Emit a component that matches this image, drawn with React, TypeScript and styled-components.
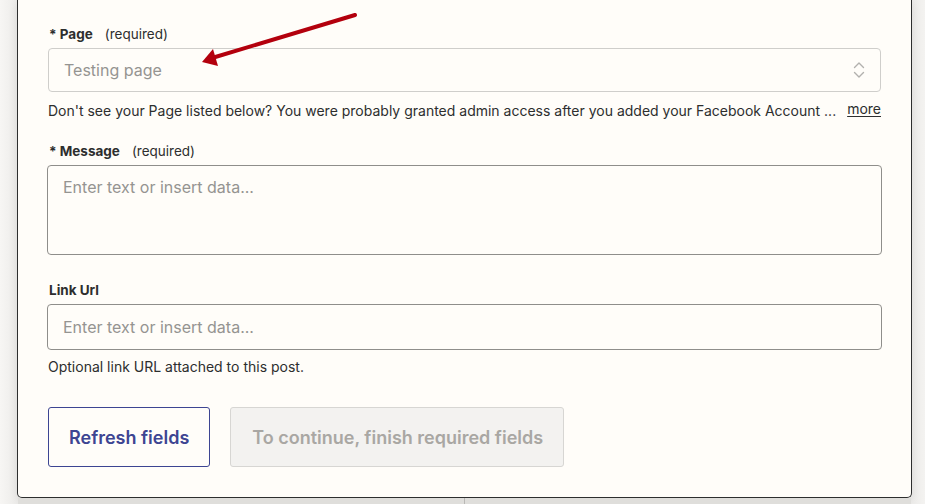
import React from "react";
import styled, { createGlobalStyle } from "styled-components";

const Global = createGlobalStyle`
  html, body { margin: 0; padding: 0; }
  body {
    background: #f4f3f1;
    font-family: Inter, "Noto Sans", "Liberation Sans", sans-serif;
    -webkit-font-smoothing: antialiased;
  }
  * { box-sizing: border-box; }
`;

const Stage = styled.div`
  position: relative;
  width: 925px;
  height: 504px;
  overflow: hidden;
  background: linear-gradient(to right, #f7f6f4 0px, #ecebe9 17px, #ecebe9 912px, #f4f3f1 925px);
  display: flex;
  flex-direction: column;
`;

const Card = styled.section`
  margin-left: 17px;
  width: 895px;
  background: #fffdf9;
  border: 1px solid #2d2e2e;
  border-top: none;
  border-radius: 0 0 5px 5px;
  padding: 24px 29px 30px 29px;
  display: flex;
  flex-direction: column;
  box-shadow: 0 2px 10px rgba(0, 0, 0, 0.08);
`;

const Field = styled.div<{ $mt?: number }>`
  display: flex;
  flex-direction: column;
  margin-top: ${(p) => p.$mt ?? 0}px;
`;

const Label = styled.div`
  display: flex;
  align-items: center;
  gap: 12px;
  height: 20px;
  font-size: 13.5px;
  color: #2d2e2e;
  margin-bottom: 4px;
  padding-left: 2px;
`;

const LabelName = styled.span`
  font-weight: 700;
`;

const LabelHint = styled.span`
  font-weight: 400;
`;

const SelectBox = styled.div`
  height: 44px;
  margin-left: 1px;
  margin-right: 1px;
  border: 1px solid #cfcecb;
  border-radius: 4px;
  display: flex;
  align-items: center;
  justify-content: space-between;
  padding: 0 14px 0 15px;
  font-size: 16px;
  color: #959491;
`;

const TextBox = styled.div<{ $h: number; $top?: boolean }>`
  height: ${(p) => p.$h}px;
  border: 1px solid #8f8e8b;
  border-radius: 4px;
  display: flex;
  align-items: ${(p) => (p.$top ? "flex-start" : "center")};
  padding: ${(p) => (p.$top ? "11px 15px" : "0 15px")};
  font-size: 16px;
  color: #959491;
`;

const Help = styled.div<{ $mt: number }>`
  margin-top: ${(p) => p.$mt}px;
  margin-left: 1px;
  height: 20px;
  display: flex;
  align-items: center;
  justify-content: space-between;
  font-size: 14px;
  color: #2d2e2e;
  white-space: nowrap;
`;

const MoreLink = styled.a`
  color: #2d2e2e;
  text-decoration: underline;
  text-underline-offset: 2px;
  margin-right: 1px;
  margin-top: -3px;
`;

const Buttons = styled.div`
  display: flex;
  gap: 20px;
  margin-top: 31px;
  margin-left: 1px;
`;

const Button = styled.button<{ $variant: "outline" | "disabled" }>`
  height: 60px;
  padding: 0 20px;
  border-radius: 3px;
  font-family: inherit;
  font-size: 18px;
  font-weight: 600;
  cursor: pointer;
  ${(p) =>
    p.$variant === "outline"
      ? `background: #fffdf9; border: 1px solid #3d4592; color: #3d4592;`
      : `background: #f3f2f0; border: 1px solid #d7d6d3; color: #a9a7a3; padding: 0 20px 0 21px;`}
`;

const Below = styled.div`
  flex: 1;
  display: flex;
  margin-left: 18px;
  width: 893px;
  background: #dfdedb;
`;

const BelowHalf = styled.div`
  width: 447px;
  border-right: 1px solid #b9b8b5;
`;

const ArrowSvg = styled.svg`
  position: absolute;
  left: 0;
  top: 0;
  pointer-events: none;
`;

function Chevrons() {
  return (
    <svg width="14" height="20" viewBox="0 0 14 20" fill="none" stroke="#b2b1ae" strokeWidth="1.4" strokeLinecap="round" strokeLinejoin="round">
      <path d="M2.5 7.5 L7 3 L11.5 7.5" />
      <path d="M2.5 12.5 L7 17 L11.5 12.5" />
    </svg>
  );
}

export default function App() {
  return (
    <>
      <Global />
      <Stage>
        <Card>
          <Field>
            <Label>
              <LabelName>* Page</LabelName>
              <LabelHint>(required)</LabelHint>
            </Label>
            <SelectBox>
              <span>Testing page</span>
              <Chevrons />
            </SelectBox>
            <Help $mt={8}>
              <span>
                Don't see your Page listed below? You were probably granted admin access after you added your Facebook Account ...
              </span>
              <MoreLink>more</MoreLink>
            </Help>
          </Field>
          <Field $mt={21}>
            <Label>
              <LabelName>* Message</LabelName>
              <LabelHint>(required)</LabelHint>
            </Label>
            <TextBox $h={90} $top>
              Enter text or insert data...
            </TextBox>
          </Field>
          <Field $mt={25}>
            <Label>
              <LabelName>Link Url</LabelName>
            </Label>
            <TextBox $h={46}>Enter text or insert data...</TextBox>
            <Help $mt={6}>
              <span>Optional link URL attached to this post.</span>
            </Help>
          </Field>
          <Buttons>
            <Button $variant="outline">Refresh fields</Button>
            <Button $variant="disabled">To continue, finish required fields</Button>
          </Buttons>
        </Card>
        <Below>
          <BelowHalf />
        </Below>
        <ArrowSvg width="925" height="504" viewBox="0 0 925 504">
          <line x1="355" y1="15" x2="212" y2="58" stroke="#b3000d" strokeWidth="4" strokeLinecap="round" />
          <polygon points="202,62 213,49 218,66" fill="#b3000d" />
        </ArrowSvg>
      </Stage>
    </>
  );
}
